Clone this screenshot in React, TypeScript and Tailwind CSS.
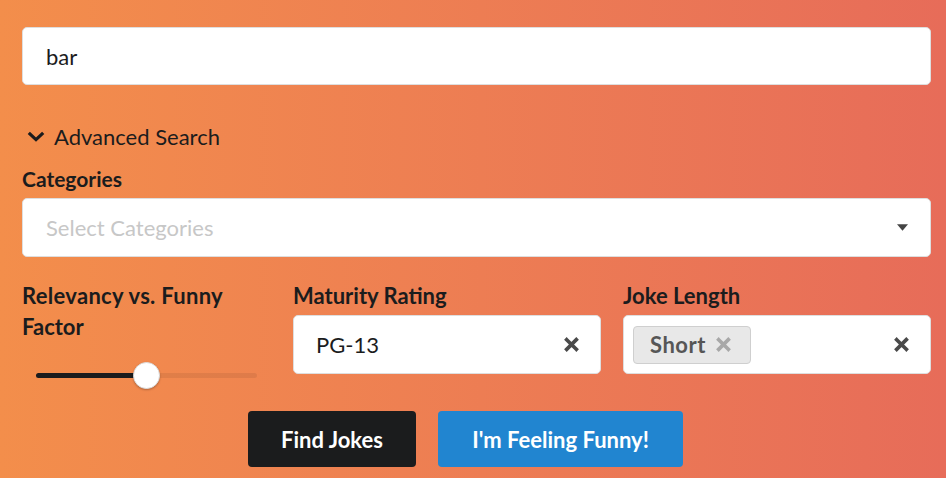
import type { ReactNode } from 'react';

// Bold "x" used by the clearable dropdowns.
function ClearIcon({ className = '' }: { className?: string }) {
  return (
    <svg viewBox="0 0 14 14" className={className} aria-hidden>
      <path d="M2.5 2.5 L11.5 11.5 M11.5 2.5 L2.5 11.5" stroke="currentColor" strokeWidth="3.4" strokeLinecap="square" />
    </svg>
  );
}

function Label({ children }: { children: ReactNode }) {
  return <div className="text-[22px] font-bold leading-[31px] text-[#1b1c1d]">{children}</div>;
}

export default function App() {
  return (
    <div
      className="min-h-[478px] w-full bg-gradient-to-r from-[#f38e4b] to-[#e76c59] pl-[22px] pr-[15px] pt-[27px] text-[#1b1c1d]"
      style={{ fontFamily: 'Lato, "Open Sans", sans-serif' }}
    >
      <div className="flex h-[58px] items-center rounded-[5px] border border-[#dedede] bg-white pl-[23px] text-[22px]">
        bar
      </div>

      <div className="mt-[39px] flex h-[24px] items-center">
        <svg viewBox="0 0 18 11" className="ml-[5px] h-[11px] w-[18px]" aria-hidden>
          <path d="M1.8 1.8 L9 8.6 L16.2 1.8" fill="none" stroke="#1b1c1d" strokeWidth="3.2" />
        </svg>
        <span className="ml-[9px] text-[22px]">Advanced Search</span>
      </div>

      <div className="mt-[19px] text-[21px] font-bold leading-[24px]">Categories</div>
      <div className="mt-[7px] flex h-[59px] items-center justify-between rounded-[5px] border border-[#dedede] bg-white pl-[23px] pr-[22px]">
        <span className="text-[22px] text-[#c7c7c7]">Select Categories</span>
        <svg viewBox="0 0 12 7" className="h-[7px] w-[11px]" aria-hidden>
          <path d="M0 0 H12 L6 7 Z" fill="#444" />
        </svg>
      </div>

      <div className="mt-[23px] flex gap-[22px]">
        <div className="w-[249px] shrink-0">
          <Label>
            <span className="tracking-[0.3px]">Relevancy vs. Funny</span>
            <br />
            Factor
          </Label>
          <div className="relative ml-[14px] mt-[31px] h-[5px] w-[221px] rounded-full bg-black/[0.07]">
            <div className="h-full w-[111px] rounded-full bg-[#1b1c1d]" />
            <div className="absolute left-[97px] top-[-11px] h-[27px] w-[27px] rounded-full border border-[#ddd] bg-white shadow-[0_1px_2px_rgba(0,0,0,0.25)]" />
          </div>
        </div>

        <div className="w-[308px] shrink-0">
          <Label>Maturity Rating</Label>
          <div className="mt-[4px] flex h-[59px] items-center justify-between rounded-[5px] border border-[#dedede] bg-white pl-[22px] pr-[21px]">
            <span className="text-[22px]">PG-13</span>
            <ClearIcon className="h-[15px] w-[15px] text-[#4a4a4a]" />
          </div>
        </div>

        <div className="w-[308px] shrink-0">
          <Label>Joke Length</Label>
          <div className="mt-[4px] flex h-[59px] items-center justify-between rounded-[5px] border border-[#dedede] bg-white pl-[9px] pr-[21px]">
            <span className="flex h-[38px] items-center gap-[10px] rounded-[4px] border border-[#cfcfcf] bg-[#e8e8e8] pl-[16px] pr-[19px] text-[22px] font-bold text-[#565656]">
              <span className="tracking-[0.5px]">Short</span>
              <ClearIcon className="h-[15px] w-[15px] text-[#a8a8a8]" />
            </span>
            <ClearIcon className="h-[15px] w-[15px] text-[#4a4a4a]" />
          </div>
        </div>
      </div>

      <div className="mt-[33px] flex justify-center gap-[22px] pr-[22px]">
        <button
          type="button"
          className="h-[56px] w-[168px] rounded-[4px] bg-[#1b1c1d] text-[22px] font-bold text-white"
        >
          Find Jokes
        </button>
        <button
          type="button"
          className="h-[56px] w-[245px] rounded-[4px] bg-[#2185d0] text-[22px] font-bold text-white"
        >
          I'm Feeling Funny!
        </button>
      </div>
    </div>
  );
}
